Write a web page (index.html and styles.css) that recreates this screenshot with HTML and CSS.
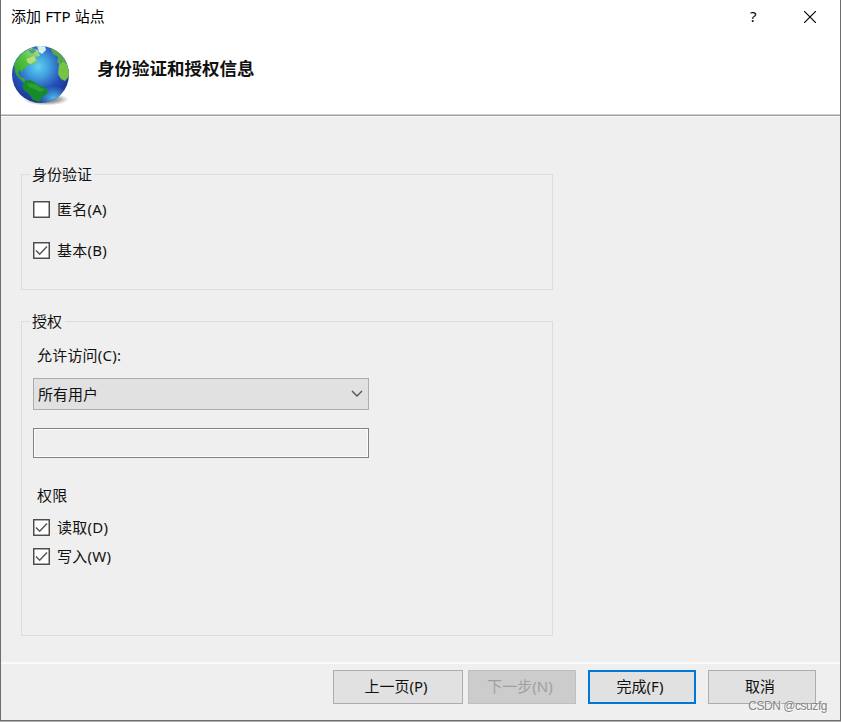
FILE: index.html
```html
<!DOCTYPE html>
<html lang="zh-CN">
<head>
<meta charset="utf-8">
<title>添加 FTP 站点</title>
<link rel="stylesheet" href="styles.css">
</head>
<body>
<div class="window">
  <header class="header">
    <div class="titlebar">
      <span class="title">添加 FTP 站点</span>
      <span class="help">?</span>
      <svg class="close" width="12" height="12" viewBox="0 0 12 12"><path d="M0 0L12 12M12 0L0 12" stroke="#000" stroke-width="1.15"/></svg>
    </div>
    <div class="banner">
      <svg class="globe" width="60" height="62" viewBox="0 0 60 62">
        <defs>
          <radialGradient id="sea" cx="46%" cy="36%" r="64%">
            <stop offset="0" stop-color="#62d0f2"/><stop offset=".3" stop-color="#3fa0dd"/><stop offset=".65" stop-color="#2750b8"/><stop offset="1" stop-color="#1a3192"/>
          </radialGradient>
          <radialGradient id="glow"><stop offset="0" stop-color="#4bbcea"/><stop offset="1" stop-color="#4bbcea" stop-opacity="0"/></radialGradient>
          <radialGradient id="shade"><stop offset="0" stop-color="#444" stop-opacity=".9"/><stop offset=".6" stop-color="#666" stop-opacity=".55"/><stop offset="1" stop-color="#888" stop-opacity="0"/></radialGradient>
          <linearGradient id="land" x1="0" y1="1" x2="1" y2="0"><stop offset="0" stop-color="#24952d"/><stop offset=".55" stop-color="#55c33e"/><stop offset="1" stop-color="#b5dc93"/></linearGradient>
          <clipPath id="ball"><circle cx="29.5" cy="29.500" r="28.5"/></clipPath>
          <filter id="soft"><feGaussianBlur stdDeviation=".7"/></filter>
        </defs>
        <ellipse cx="35" cy="54.500" rx="23" ry="6" fill="url(#shade)"/>
        <circle cx="29.500" cy="29.500" r="28.500" fill="url(#sea)"/>
        <g clip-path="url(#ball)">
          <ellipse cx="43" cy="53" rx="17" ry="12" fill="url(#glow)"/>
          <g filter="url(#soft)">
            <path d="M4 27L3 18L11 8L20 3L27 5L29 11L24 12L27 16L21 20L18 19L15 23L12 24L11 28L9 25L7 27L9 32L13 33L16 40L10 35L6 31Z" fill="url(#land)"/>
            <path d="M17 5L23 4L25 6L21 9Z" fill="#4b9f8c"/>
            <path d="M26 1L34 1L35 5L31 9L28 7Z" fill="#d7eeee"/>
            <path d="M39 2L46 3L53 11L57 19L51 16L49 20L46 17L47 12L42 9Z" fill="#55a84f"/>
            <path d="M48 20L52 16L56 19L59 30L54 36L50 34L47 29Z" fill="#75c344"/>
            <path d="M14 36L19 35L25 38L31 42L37 44L36 49L31 52L29 57L22 55L18 49L13 45L11 41Z" fill="#168b2d"/>
            <path d="M16 38L25 39L30 43L34 45L29 47L23 44L18 42Z" fill="#2da030"/>
            <path d="M15 14L23 11L25 15L20 19L17 18Z" fill="#c5e28d" opacity=".8"/>
          </g>
        </g>
      </svg>
      <h1 class="heading">身份验证和授权信息</h1>
    </div>
  </header>
  <main class="content">
    <section class="group auth">
      <h2 class="legend">身份验证</h2>
      <label class="check"><svg class="box" viewBox="0 0 17 17"><rect x=".75" y=".75" width="15.500" height="15.500"/></svg>匿名(A)</label>
      <label class="check second"><svg class="box" viewBox="0 0 17 17"><rect x=".75" y=".75" width="15.500" height="15.500"/><path d="M3 8.500L6.700 12.200L14 4.500"/></svg>基本(B)</label>
    </section>
    <section class="group access">
      <h2 class="legend">授权</h2>
      <div class="label">允许访问(C):</div>
      <div class="select"><span>所有用户</span><svg width="12" height="8" viewBox="0 0 12 8"><path d="M1 1L6 6L11 1" fill="none" stroke="#555" stroke-width="1.400"/></svg></div>
      <div class="field"></div>
      <div class="label perms">权限</div>
      <label class="check read"><svg class="box" viewBox="0 0 17 17"><rect x=".75" y=".75" width="15.500" height="15.500"/><path d="M3 8.500L6.700 12.200L14 4.500"/></svg>读取(D)</label>
      <label class="check write"><svg class="box" viewBox="0 0 17 17"><rect x=".75" y=".75" width="15.500" height="15.500"/><path d="M3 8.500L6.700 12.200L14 4.500"/></svg>写入(W)</label>
    </section>
  </main>
  <footer class="footer">
    <div class="button back">上一页(P)</div>
    <div class="button next">下一步(N)</div>
    <div class="button finish">完成(F)</div>
    <div class="button cancel">取消</div>
    <span class="watermark">CSDN @csuzfg</span>
  </footer>
</div>
</body>
</html>
```
FILE: styles.css
```css
* { box-sizing: border-box; }
body {
  margin: 0;
  background: #b5b3b3;
  font: 15px/20px "Noto Sans", "Noto Sans CJK SC", sans-serif;
  color: #111;
}
.window {
  display: flex;
  flex-direction: column;
  height: 721px;
  border: solid #6d6d6d;
  border-width: 0 1px 1px;
  background: #efefef;
}
.header {
  height: 116px;
  background: #fff;
  border-bottom: 1px solid #a0a0a0;
  box-shadow: inset 0 -1px #d0d0d0, 0 1px #fafafa;
}
.titlebar {
  display: flex;
  align-items: center;
  height: 34px;
  padding: 0 24px 0 10px;
  color: #000;
}
.title { flex: 1; margin-top: -2px; font-size: 15px; letter-spacing: .1px; }
.help { width: 8px; margin: -2px 46px 0 0; }
.close { display: block; }
.banner { display: flex; padding: 11px 0 0 10px; }
.heading {
  margin: 12px 0 0 26px;
  font-size: 17.500px;
  line-height: 22px;
  font-weight: 700;
}
.content { flex: 1; padding: 58px 0 0 20px; }
.group {
  width: 532px;
  border: 1px solid #dcdcdc;
  padding-left: 11px;
}
.auth { height: 116px; }
.access { height: 315px; margin-top: 31px; }
.legend {
  width: fit-content;
  margin: -11px 0 0 -3px;
  padding: 0 3px 0 2px;
  background: #efefef;
  font-size: 15px;
  font-weight: 400;
}
.check {
  display: flex;
  align-items: center;
  gap: 7px;
  height: 20px;
  margin-top: 15px;
  letter-spacing: .25px;
}
.check.second { margin-top: 21px; }
.box { width: 17px; height: 17px; fill: #fff; stroke: #444; stroke-width: 1.4; }
.box path { fill: none; stroke: #555; stroke-width: 1.5; }
.label { margin: 14px 0 0 4px; letter-spacing: .2px; }
.select {
  display: flex;
  align-items: center;
  justify-content: space-between;
  width: 336px;
  height: 32px;
  margin-top: 13px;
  padding: 0 5px 0 4px;
  border: 1px solid #adadad;
  background: #e1e1e1;
}
.field {
  width: 336px;
  height: 30px;
  margin-top: 18px;
  border: 1px solid #828282;
  box-shadow: inset 0 0 0 1px #fcfcfc;
}
.label.perms { margin-top: 27px; }
.check.read { margin-top: 12px; }
.check.write { margin-top: 9px; }
.footer {
  position: relative;
  display: flex;
  height: 58px;
  padding: 6px 0 0 332px;
  border-top: 2px solid #fafafa;
}
.button {
  display: flex;
  align-items: center;
  justify-content: center;
  width: 108px;
  height: 34px;
  border: 1px solid #adadad;
  background: #e1e1e1;
  padding: 0 4px 2px 0;
}
.back { width: 130px; margin-right: 5px; }
.next { border-color: #bfbfbf; background: #ccc; color: #a0a0a0; }
.finish { margin-left: 12px; border: 2px solid #0078d7; }
.cancel { margin-left: 12px; }
.watermark {
  position: absolute;
  right: 13px;
  bottom: 6px;
  font: 12px/16px "Liberation Sans", sans-serif;
  letter-spacing: -.45px;
  color: #858585;
  text-shadow: 1px 1px #f8f8f8;
}
```
